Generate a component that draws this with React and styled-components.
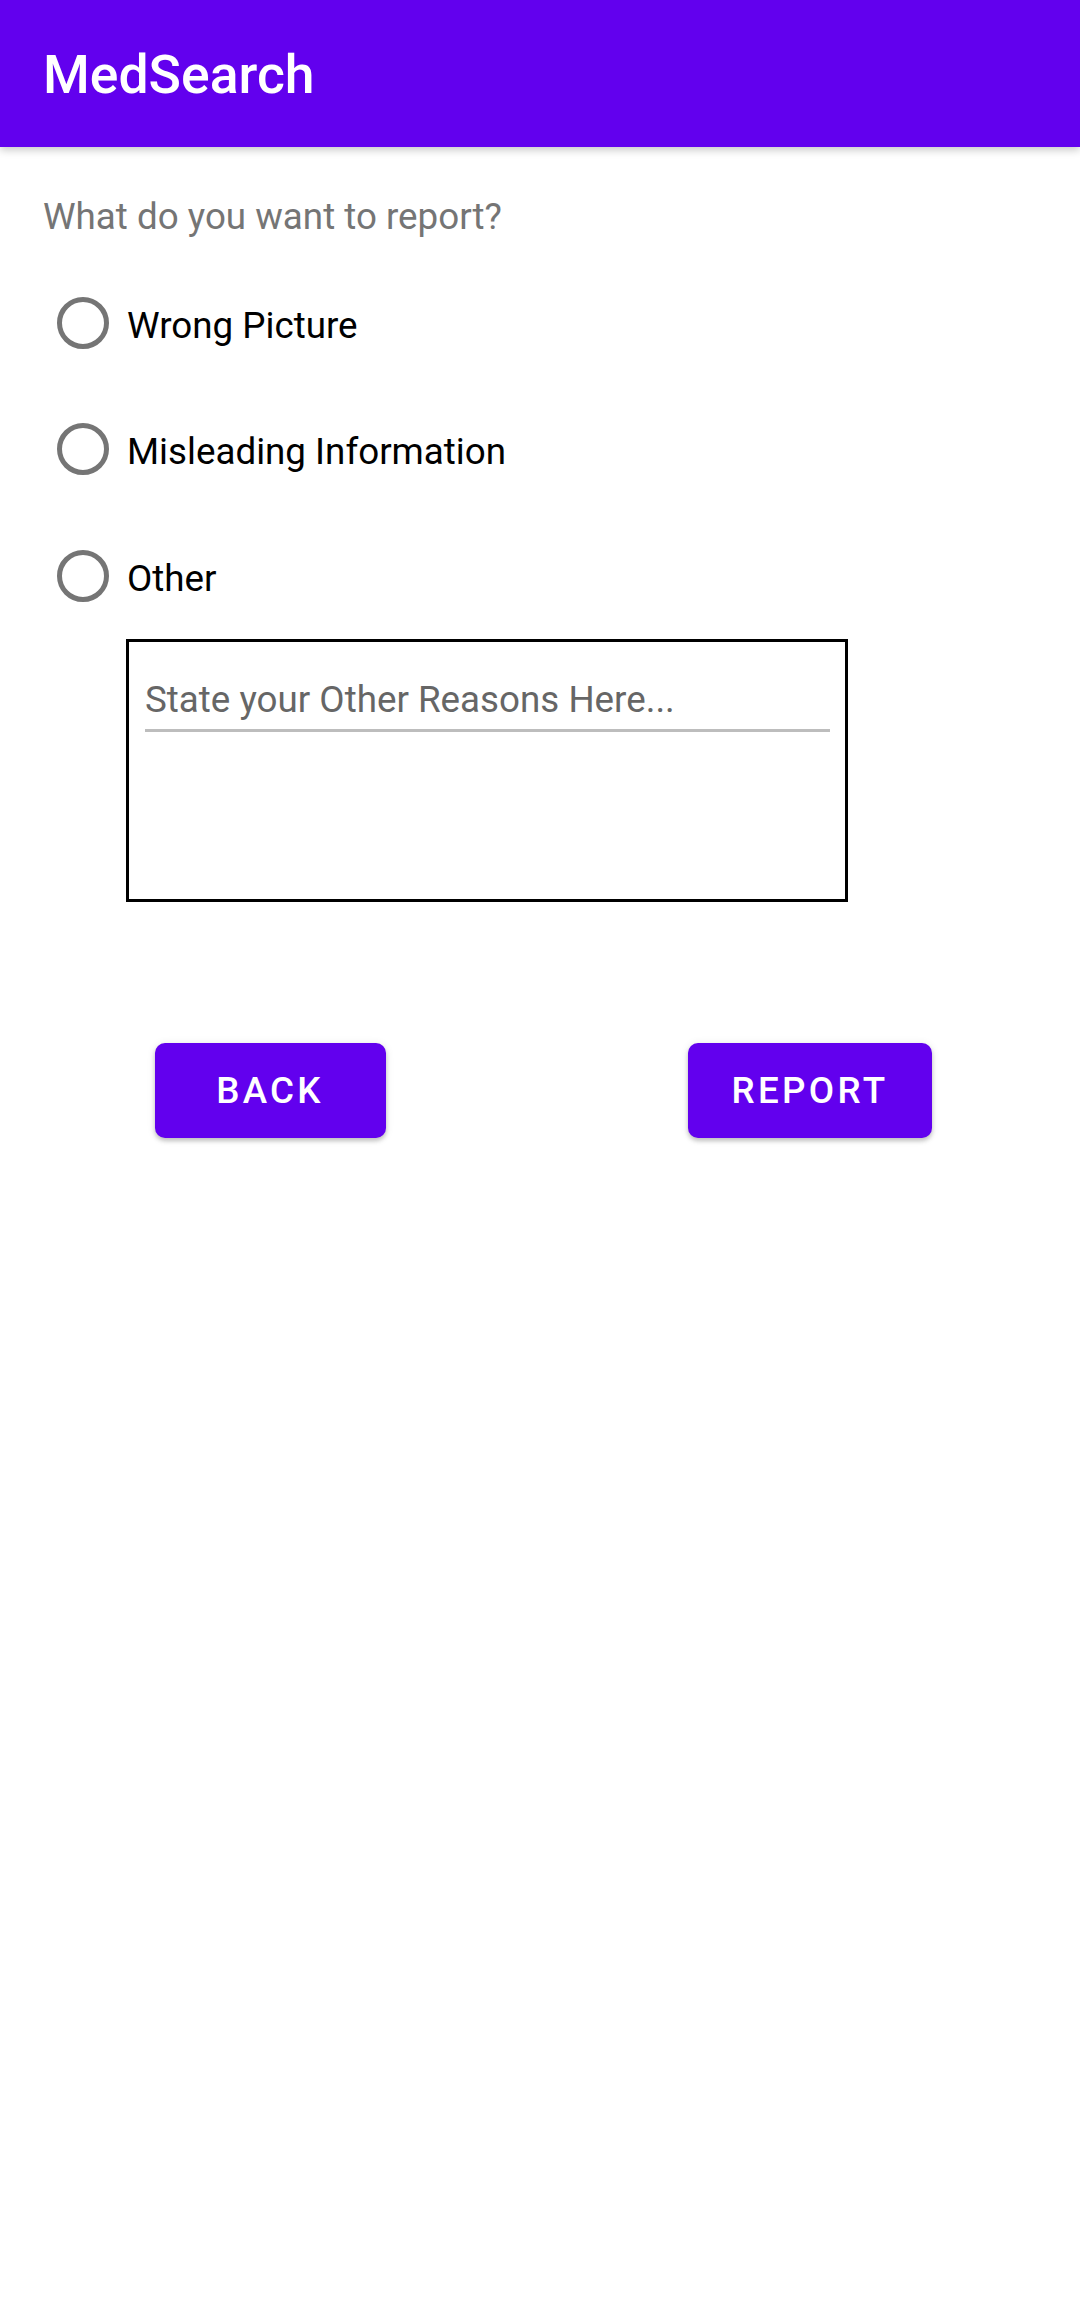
import React from "react";
import styled, { createGlobalStyle } from "styled-components";

const Global = createGlobalStyle`
  html, body { margin: 0; padding: 0; background: #ffffff; }
  body { font-family: Roboto, "Noto Sans", "Liberation Sans", sans-serif; }
  * { box-sizing: border-box; }
`;

const Screen = styled.div`
  width: 1080px;
  min-height: 2312px;
  background: #ffffff;
  display: flex;
  flex-direction: column;
`;

const AppBar = styled.header`
  height: 147px;
  background: #6200ee;
  display: flex;
  align-items: center;
  padding-left: 43px;
  box-shadow: 0 3px 8px rgba(0, 0, 0, 0.22);
  position: relative;
  z-index: 1;
`;

const Title = styled.h1`
  margin: 0;
  color: #ffffff;
  font-size: 53.5px;
  font-weight: 500;
  line-height: 62px;
  padding-top: 2px;
`;

const Content = styled.main`
  display: flex;
  flex-direction: column;
  padding-top: 48px;
`;

const Prompt = styled.p`
  margin: 0 0 22px 43px;
  color: #757575;
  font-size: 36.75px;
  line-height: 43px;
`;

const RadioRow = styled.label`
  height: 126.3px;
  display: flex;
  align-items: center;
  padding-left: 57px;
  gap: 18px;
  cursor: pointer;
`;

const RadioCircle = styled.span`
  width: 52px;
  height: 52px;
  border-radius: 50%;
  border: 5.5px solid #757575;
  flex: none;
`;

const RadioLabel = styled.span`
  color: #000000;
  font-size: 36.75px;
  line-height: 43px;
  padding-top: 5px;
`;

const ReasonBox = styled.div`
  margin-left: 126px;
  width: 722px;
  height: 263px;
  border: 3px solid #000000;
  padding: 36px 15px 0 16px;
`;

const ReasonInput = styled.div`
  border-bottom: 3px solid #bdbdbd;
  padding-bottom: 8px;
  color: #666666;
  font-size: 36.75px;
  line-height: 43px;
`;

const ButtonRow = styled.div`
  display: grid;
  grid-template-columns: 1fr 1fr;
  margin-top: 141px;
`;

const Cell = styled.div`
  display: flex;
  justify-content: center;
`;

const Button = styled.button`
  height: 95px;
  min-width: ${(p) => p.$minWidth || 0}px;
  padding: 0 44px;
  border: none;
  border-radius: 10px;
  background: #6200ee;
  color: #ffffff;
  font-family: Roboto, "Noto Sans", "Liberation Sans", sans-serif;
  font-size: 36.75px;
  font-weight: 500;
  letter-spacing: 3.3px;
  text-transform: uppercase;
  box-shadow: 0 3px 4px rgba(0, 0, 0, 0.2), 0 1px 8px rgba(0, 0, 0, 0.1);
  cursor: pointer;
`;

const options = ["Wrong Picture", "Misleading Information", "Other"];

export default function App() {
  return (
    <>
      <Global />
      <Screen>
        <AppBar>
          <Title>MedSearch</Title>
        </AppBar>
        <Content>
          <Prompt>What do you want to report?</Prompt>
          {options.map((o) => (
            <RadioRow key={o}>
              <RadioCircle />
              <RadioLabel>{o}</RadioLabel>
            </RadioRow>
          ))}
          <ReasonBox>
            <ReasonInput>State your Other Reasons Here...</ReasonInput>
          </ReasonBox>
          <ButtonRow>
            <Cell>
              <Button $minWidth={231}>Back</Button>
            </Cell>
            <Cell>
              <Button>Report</Button>
            </Cell>
          </ButtonRow>
        </Content>
      </Screen>
    </>
  );
}
